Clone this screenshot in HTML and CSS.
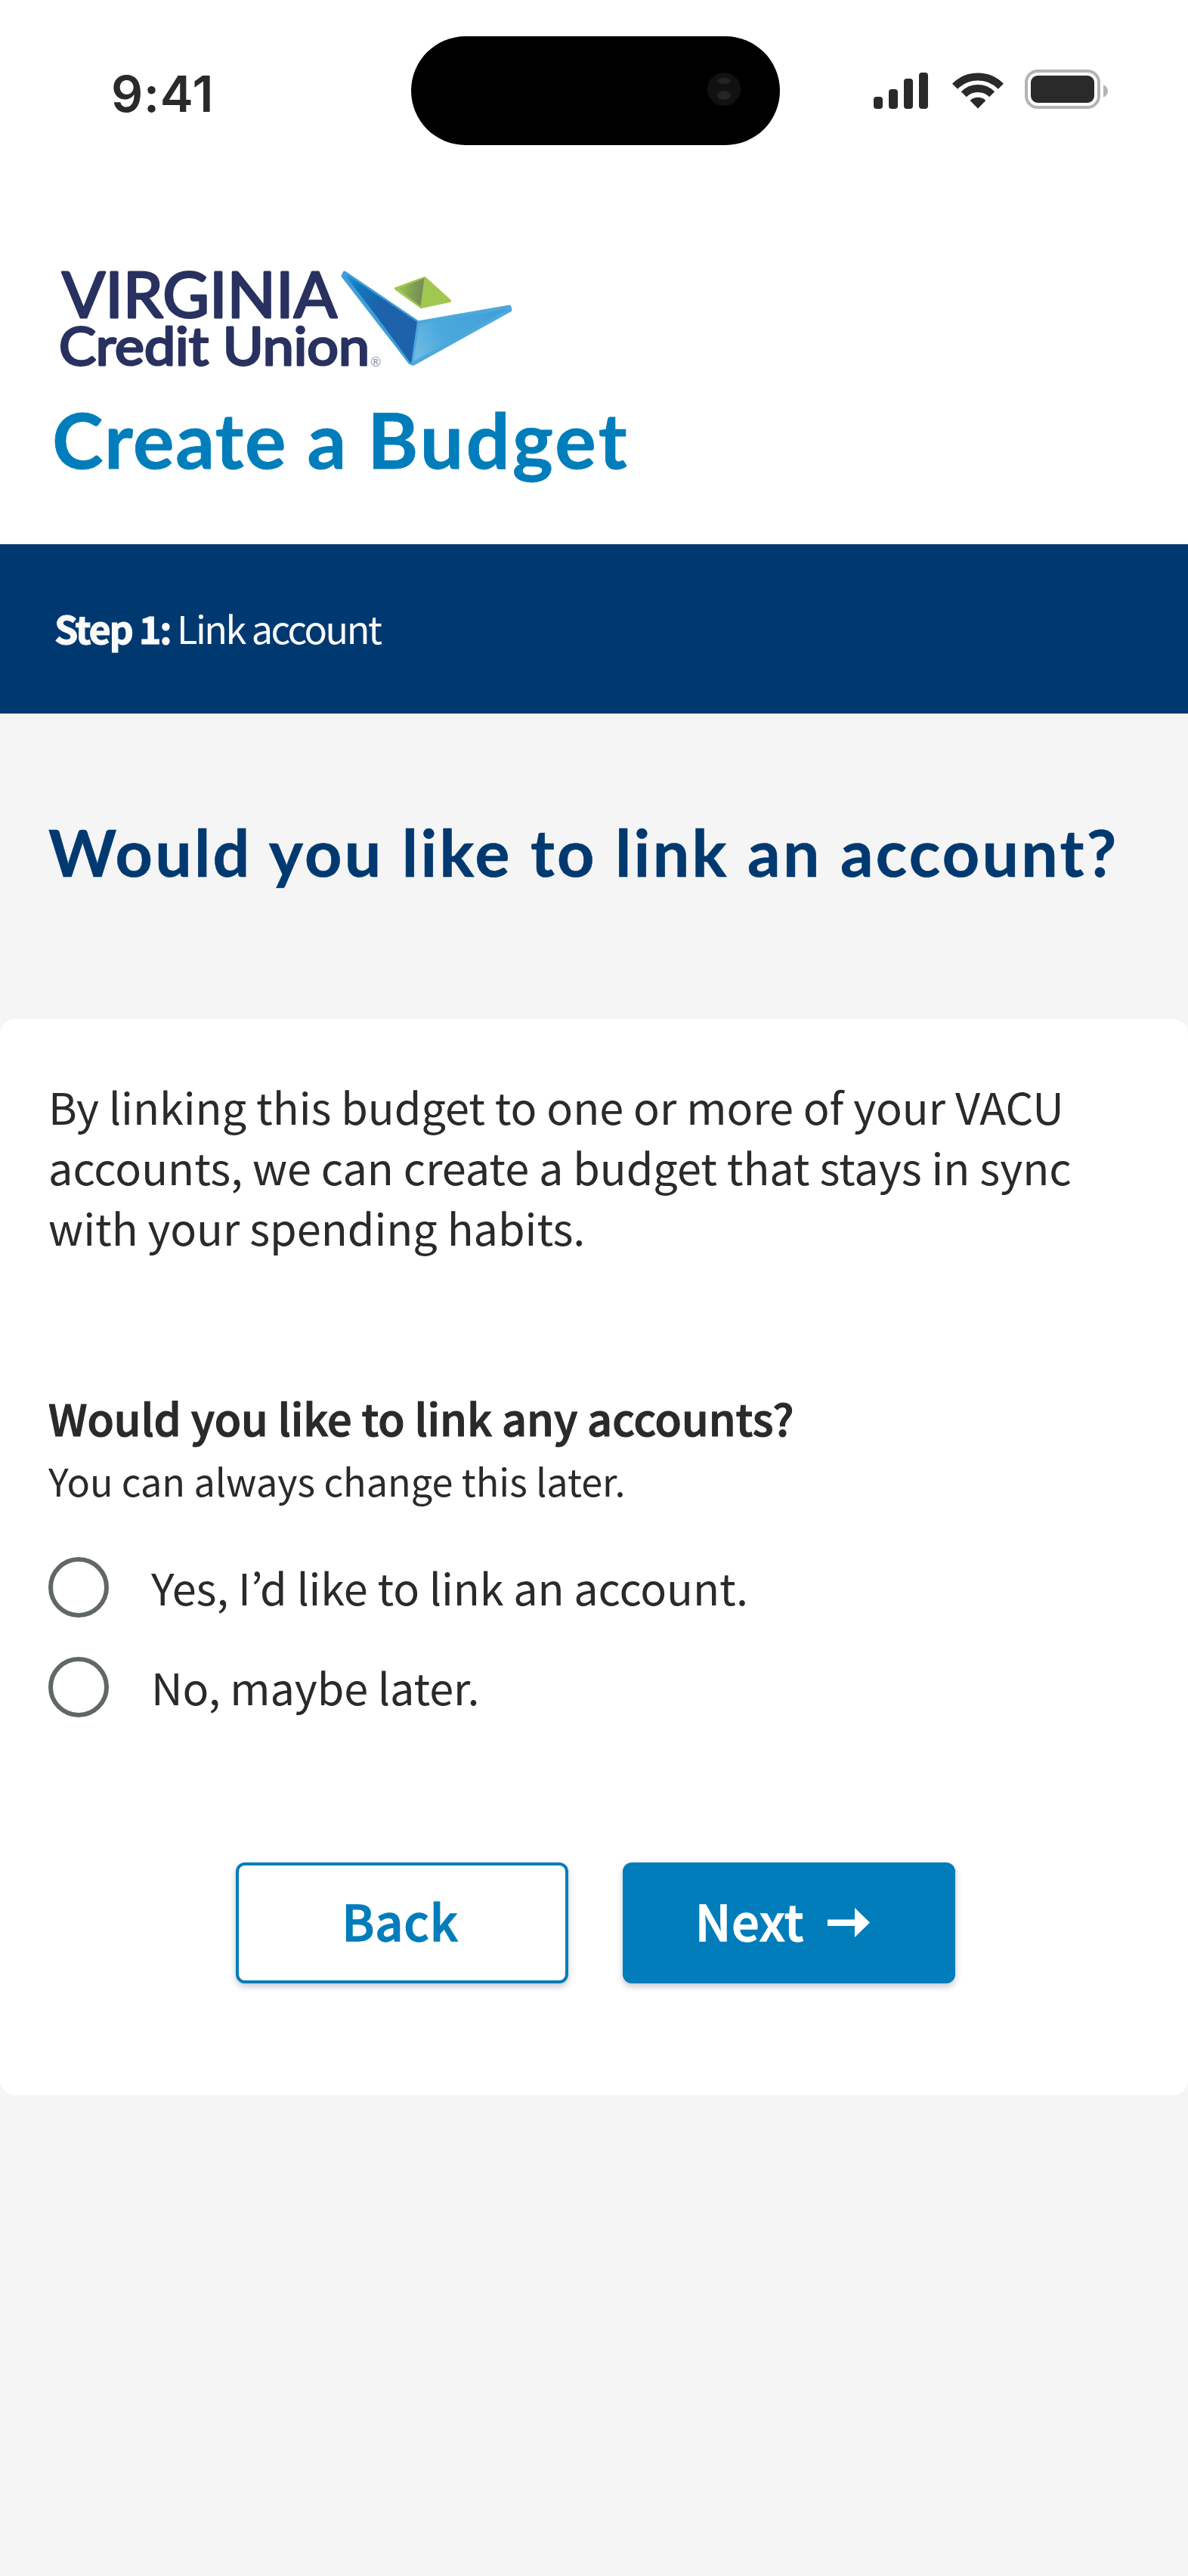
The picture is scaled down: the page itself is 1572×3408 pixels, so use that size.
FILE: index.html
```html
<!DOCTYPE html>
<html lang="en">
<head>
<meta charset="utf-8">
<title>Create a Budget</title>
<link rel="stylesheet" href="styles.css">
</head>
<body>
<header class="header">
  <div class="status">
    <div class="time">9:41</div>
    <div class="island">
      <svg class="camera" width="44" height="44" viewBox="0 0 44 44">
        <circle cx="22" cy="22" r="22" fill="#111"/>
        <ellipse cx="22" cy="11" rx="9" ry="4" fill="#232326"/>
        <ellipse cx="22" cy="30" rx="9" ry="6" fill="#252525"/>
      </svg>
    </div>
    <div class="indicators">
      <svg width="72" height="48" viewBox="0 0 72 48" fill="#2a2a2a">
        <rect x="0" y="32" width="12" height="16" rx="4"/>
        <rect x="20" y="22" width="12" height="26" rx="4"/>
        <rect x="40" y="8" width="12" height="40" rx="4"/>
        <rect x="60" y="0" width="12" height="48" rx="4"/>
      </svg>
      <svg width="68" height="48" viewBox="0 0 68 48" fill="none" stroke="#2a2a2a" stroke-width="10">
        <path d="M3.6 18.2A42.5 42.5 0 0 1 64.4 18.2"/>
        <path d="M15.3 28.8A26.5 26.5 0 0 1 52.7 28.8"/>
        <path d="M34 46.5L24.6 37A14.5 14.5 0 0 1 43.4 37Z" fill="#2a2a2a" stroke-width="1.5" stroke-linejoin="round"/>
      </svg>
      <svg class="battery" width="110" height="52" viewBox="0 0 110 52">
        <rect x="2" y="2" width="96" height="48" rx="15" fill="none" stroke="#b3b4b7" stroke-width="4"/>
        <rect x="8" y="8" width="84" height="36" rx="9" fill="#2a2a2a"/>
        <path d="M104 20C108 22 110 25 110 28.500C110 32 108 35 104 37Z" fill="#b3b4b7"/>
      </svg>
    </div>
  </div>
  <svg class="logo" width="604" height="144" viewBox="76 350 604 144" role="img" aria-label="Virginia Credit Union">
    <defs>
      <linearGradient id="left" x1="452" y1="360" x2="530" y2="440" gradientUnits="userSpaceOnUse">
        <stop offset="0" stop-color="#3aa0da"/><stop offset=".25" stop-color="#1277bd"/><stop offset=".6" stop-color="#1c63ab"/>
      </linearGradient>
      <linearGradient id="right" x1="548" y1="460" x2="676" y2="405" gradientUnits="userSpaceOnUse">
        <stop offset="0" stop-color="#6fb9e2"/><stop offset=".3" stop-color="#4aa8dd"/><stop offset=".7" stop-color="#46a3da"/><stop offset="1" stop-color="#3a9ad3"/>
      </linearGradient>
      <linearGradient id="leaf" x1="526" y1="385" x2="560" y2="390" gradientUnits="userSpaceOnUse">
        <stop offset="0" stop-color="#9dc64d"/><stop offset=".6" stop-color="#7f9d55"/><stop offset="1" stop-color="#748a5a"/>
      </linearGradient>
    </defs>
    <g class="logo-text">
      <text x="82" y="420" font-size="84" textLength="364" lengthAdjust="spacingAndGlyphs">VIRGINIA</text>
      <text x="78" y="483" font-size="69" textLength="411" lengthAdjust="spacingAndGlyphs">Credit Union</text>
    </g>
    <text class="logo-mark" x="490" y="485" font-size="17">®</text>
    <g stroke-linejoin="round" stroke-width="5">
      <path d="M456 361L552 426L546 481L543 480L454 365Z" fill="url(#left)" stroke="#3f9fd8"/>
      <path d="M553 427L674 406L675 410L547 481L544 480Z" fill="url(#right)" stroke="#4da8dc"/>
    </g>
    <path d="M457 362L552 426L544 481Z" fill="url(#left)"/>
    <path d="M524 382L562 368L595 398L557 406Z" fill="#a0c850" stroke="#a0c850" stroke-width="4" stroke-linejoin="round"/>
    <path d="M527 382L561.500 368L556.500 405Z" fill="url(#leaf)"/>
  </svg>
  <h1 class="title">Create a <span class="title-wide">Budget</span></h1>
</header>

<div class="step"><b>Step 1:</b> Link account</div>

<main>
  <h2 class="heading">Would you like to link an account?</h2>
  <section class="card">
    <p class="intro">By linking this budget to one or more of your VACU accounts, we can create a budget that stays in sync with your spending habits.</p>
    <h3 class="question">Would you like to link any accounts?</h3>
    <p class="hint">You can always change this later.</p>
    <div class="options">
      <label class="option"><input class="radio" type="radio" name="link"><span>Yes, I’d like to link an account.</span></label>
      <label class="option"><input class="radio" type="radio" name="link"><span>No, maybe later.</span></label>
    </div>
    <div class="actions">
      <button class="btn btn-outline" type="button">Back</button>
      <button class="btn btn-solid" type="button">Next
        <svg class="arrow" width="56" height="40" viewBox="0 0 56 40" fill="#fff"><path d="M0 15.500H36V0L56 19.500L36 39V24H0Z"/></svg>
      </button>
    </div>
  </section>
</main>
</body>
</html>
```
FILE: styles.css
```css
* { box-sizing: border-box; }

body {
  margin: 0;
  min-height: 3408px;
  background: #f5f5f5;
  color: #2a2a2a;
  font-family: "Noto Sans CJK KR", "Noto Sans", sans-serif;
}

h1, h2, h3, p { margin: 0; }
svg { display: block; flex: none; }

.header {
  height: 720px;
  background: #fff;
}

.status {
  display: grid;
  grid-template-columns: 544px 488px 1fr;
  align-items: start;
  height: 350px;
  padding-top: 48px;
}

.time {
  padding: 36px 0 0 147px;
  font: 600 66px/80px Inter, sans-serif;
  letter-spacing: 0.8px;
}

.island {
  display: flex;
  justify-content: flex-end;
  height: 144px;
  padding: 48px 52px 0 0;
  border-radius: 72px;
  background: #000;
}

.indicators {
  display: flex;
  align-items: flex-end;
  gap: 32px;
  padding: 44px 0 0 124px;
}

.battery { margin-left: -4px; }

.logo {
  margin-left: 76px;
  overflow: visible;
}

.logo-text {
  font-family: Lato, sans-serif;
  font-weight: 400;
  fill: #28315f;
  stroke: #28315f;
  stroke-width: 3px;
  stroke-linejoin: round;
}

.logo-mark {
  font-family: Lato, sans-serif;
  fill: #8a8fa8;
}

.title {
  margin-top: 26px;
  padding-left: 69px;
  color: #007dba;
  font: 700 102px/121px Lato, sans-serif;
  letter-spacing: 1.6px;
  -webkit-text-stroke: 0.8px #007dba;
}

.title-wide { letter-spacing: 3.4px; }

.step {
  height: 224px;
  padding-left: 72px;
  background: #003970;
  color: #fafafa;
  font-size: 50.4px;
  line-height: 221px;
  letter-spacing: -2.5px;
}

.step b {
  letter-spacing: -2.3px;
  -webkit-text-stroke: 1px #fafafa;
}

.heading {
  height: 404px;
  padding: 130px 0 0 64px;
  color: #003970;
  font: 700 86px/105px Lato, sans-serif;
  letter-spacing: 3.3px;
  white-space: nowrap;
  -webkit-text-stroke: 0.6px #003970;
}

.card {
  height: 1424px;
  padding: 75px 64px 0;
  border-radius: 20px;
  background: #fff;
  font-size: 57.6px;
  line-height: 80px;
}

.intro { letter-spacing: -0.03px; }

.question {
  margin-top: 172px;
  font-size: 57.6px;
  font-weight: 500;
  letter-spacing: -0.05px;
  -webkit-text-stroke: 1.2px #2a2a2a;
}

.hint {
  margin-top: 7px;
  font-size: 50.4px;
  line-height: 73px;
}

.options {
  display: flex;
  flex-direction: column;
  gap: 52px;
  margin-top: 65px;
  letter-spacing: -0.12px;
}

.option {
  display: flex;
  gap: 56px;
  height: 80px;
  line-height: 78px;
}

.radio {
  flex: none;
  width: 80px;
  height: 80px;
  margin: 0;
  appearance: none;
  border: 6px solid #616763;
  border-radius: 50%;
}

.actions {
  display: flex;
  gap: 72px;
  margin: 192px 0 0 248px;
}

.btn {
  display: flex;
  align-items: flex-start;
  justify-content: center;
  width: 440px;
  height: 160px;
  padding: 0 5px 0 0;
  border: 4px solid #007dba;
  border-radius: 12px;
  box-shadow: 0 4px 8px rgba(0, 40, 70, .25);
  font: 500 64.8px/144px "Noto Sans CJK KR", "Noto Sans", sans-serif;
  letter-spacing: 0.8px;
  -webkit-text-stroke: 1.3px currentColor;
}

.btn-outline {
  background: #fff;
  color: #007dba;
}

.btn-solid {
  gap: 31px;
  padding-right: 17px;
  background: #007dba;
  color: #fff;
}

.arrow { margin-top: 56px; }
```
